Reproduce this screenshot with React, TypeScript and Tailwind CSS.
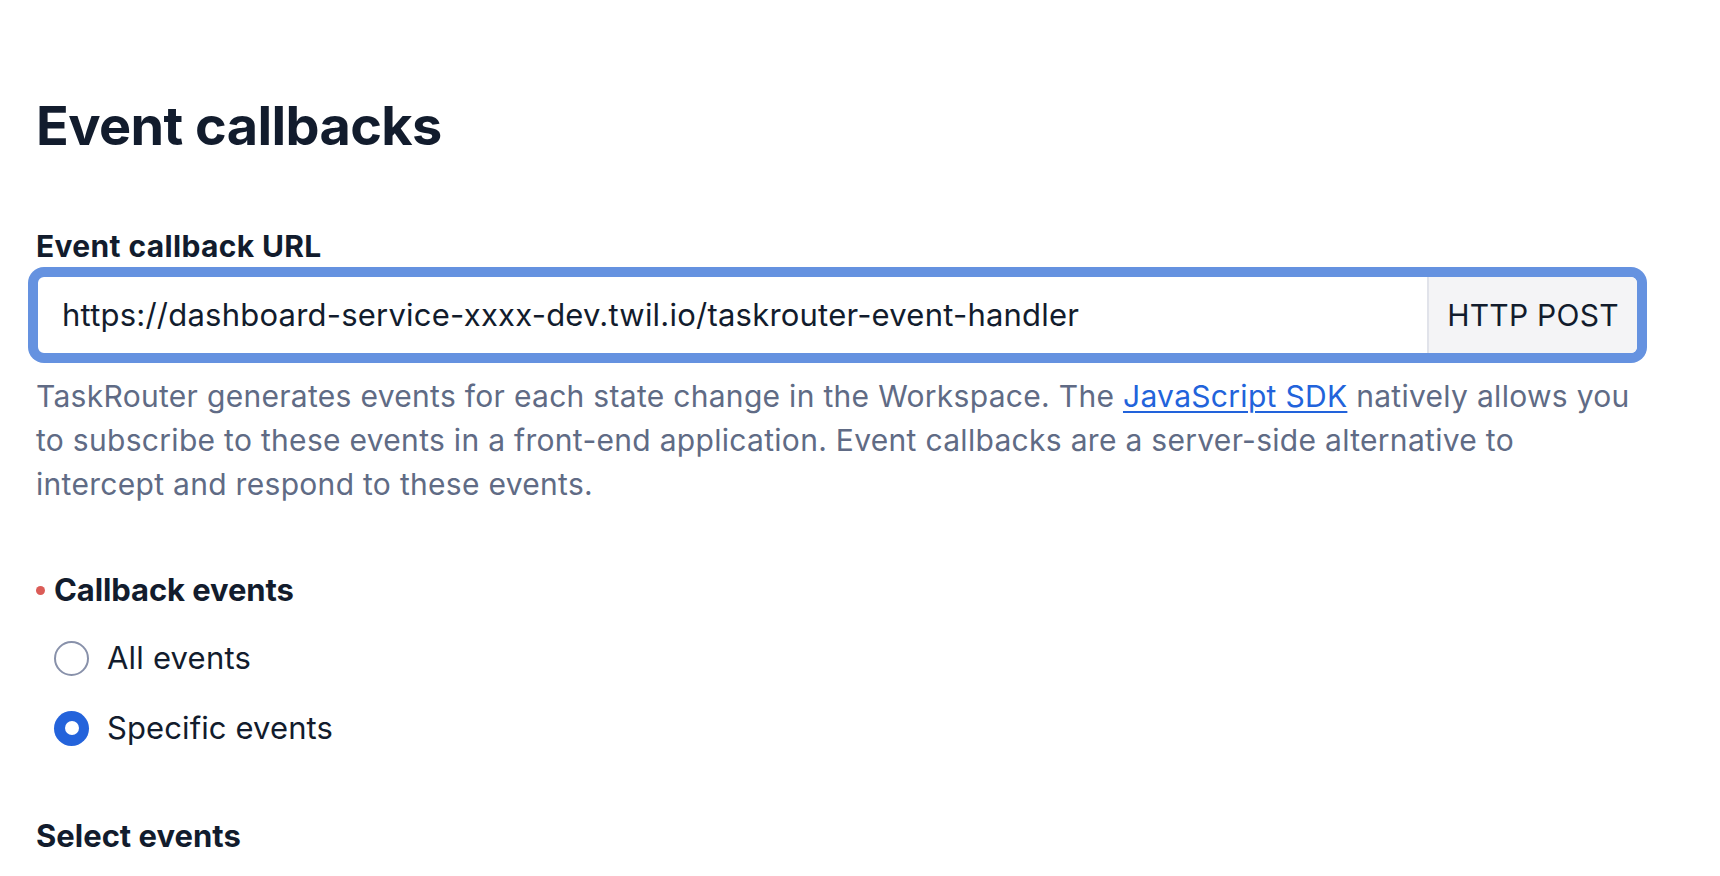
import React from "react";

export default function App() {
  return (
    <div className="w-[1720px] h-[876px] bg-white overflow-hidden text-[#121c2d] font-['Inter',sans-serif]">
      <div className="pl-[36px] pt-[91px] w-[1639px]">
        <h1 className="text-[54px] leading-[70px] font-bold tracking-[-0.6px]">Event callbacks</h1>

        <label className="block mt-[65px] text-[30px] leading-[40px] font-bold tracking-[0.35px]">Event callback URL</label>
        <div className="mt-[9px] flex h-[80px] rounded-[8px] border-2 border-[#6592e0] shadow-[0_0_0_8px_#6592e0] overflow-hidden bg-white">
          <div className="flex-1 flex items-center pl-[24px] text-[31px] leading-[40px] tracking-[0.22px] whitespace-nowrap">
            https://dashboard-service-xxxx-dev.twil.io/taskrouter-event-handler
          </div>
          <div className="w-[210px] border-l-2 border-[#e1e3ea] bg-[#f4f4f6] flex items-center justify-center text-[30px] leading-[40px] tracking-[0.25px]">
            HTTP POST
          </div>
        </div>
        <p className="mt-[19px] text-[30px] leading-[44px] tracking-[0.3px] text-[#606b85]">
          TaskRouter generates events for each state change in the Workspace. The{" "}
          <a href="#" className="text-[#2263db] underline underline-offset-[4px] decoration-[2px]">JavaScript SDK</a>{" "}
          natively allows you to subscribe to these events in a front-end application. Event callbacks are a
          server-side alternative to intercept and respond to these events.
        </p>

        <div className="mt-[64px] flex items-center gap-[9px] text-[31px] leading-[40px] font-bold tracking-[-0.1px]">
          <span className="w-[9px] h-[9px] rounded-full bg-[#db5c57]" />
          <span>Callback events</span>
        </div>

        <div className="mt-[28px] flex flex-col gap-[30px] pl-[18px]">
          <div className="flex items-center gap-[18px] h-[40px]">
            <span className="w-[35px] h-[35px] rounded-full border-2 border-[#8891aa] bg-white" />
            <span className="text-[31px] leading-[40px] tracking-[0.2px]">All events</span>
          </div>
          <div className="flex items-center gap-[18px] h-[40px]">
            <span className="w-[35px] h-[35px] rounded-full bg-[#2463db] flex items-center justify-center">
              <span className="w-[14px] h-[14px] rounded-full bg-white" />
            </span>
            <span className="text-[31px] leading-[40px] tracking-[0.1px]">Specific events</span>
          </div>
        </div>

        <div className="mt-[68px] text-[31px] leading-[40px] font-bold">Select events</div>
      </div>
    </div>
  );
}
